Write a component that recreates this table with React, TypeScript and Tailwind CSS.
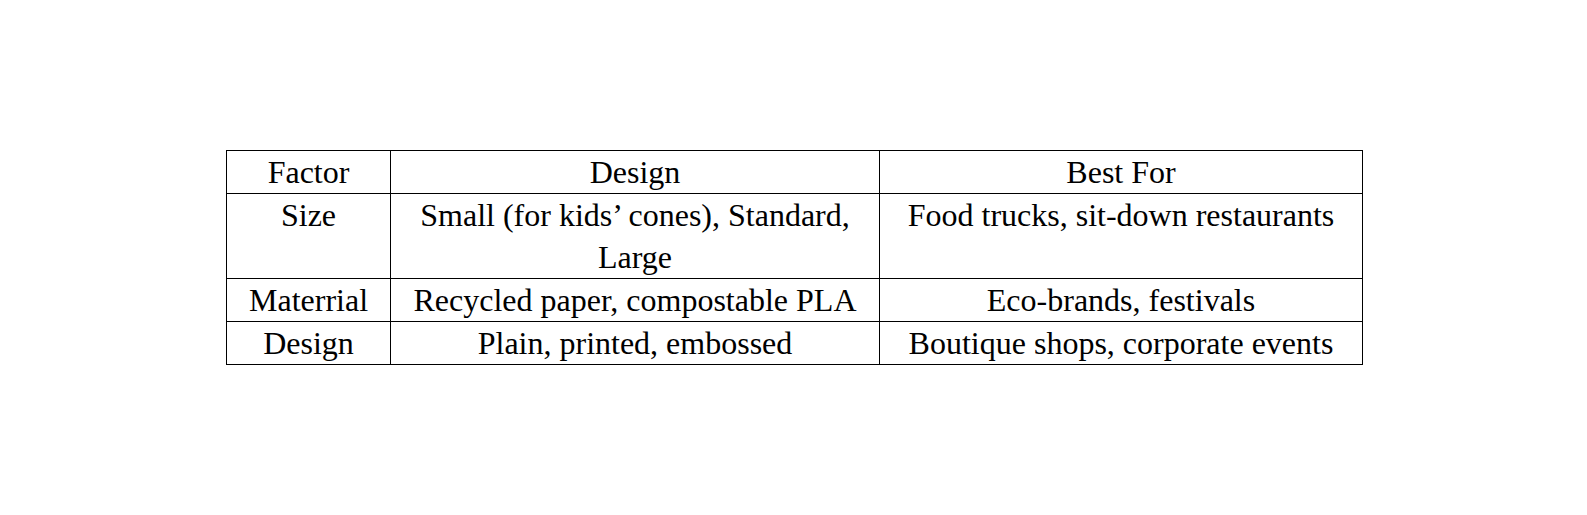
import { Fragment } from 'react'

const rows: { factor: string; design: string; bestFor: string }[] = [
  { factor: 'Size', design: 'Small (for kids’ cones), Standard, Large', bestFor: 'Food trucks, sit-down restaurants' },
  { factor: 'Materrial', design: 'Recycled paper, compostable PLA', bestFor: 'Eco-brands, festivals' },
  { factor: 'Design', design: 'Plain, printed, embossed', bestFor: 'Boutique shops, corporate events' },
]

function Cell({ children }: { children: React.ReactNode }) {
  return (
    <div className="border-r border-b border-black px-2 text-center leading-[42px]">
      {children}
    </div>
  )
}

export default function App() {
  return (
    <div className="min-h-[515px] w-full bg-white pt-[150px] pl-[226px] text-black font-['Liberation_Serif','Times_New_Roman',serif] text-[32px]">
      <div className="grid w-fit grid-cols-[164px_489px_483px] border-l border-t border-black">
        <Cell>Factor</Cell>
        <Cell>Design</Cell>
        <Cell>Best For</Cell>
        {rows.map(row => (
          <Fragment key={row.factor}>
            <Cell>{row.factor}</Cell>
            <Cell>{row.design}</Cell>
            <Cell>{row.bestFor}</Cell>
          </Fragment>
        ))}
      </div>
    </div>
  )
}
